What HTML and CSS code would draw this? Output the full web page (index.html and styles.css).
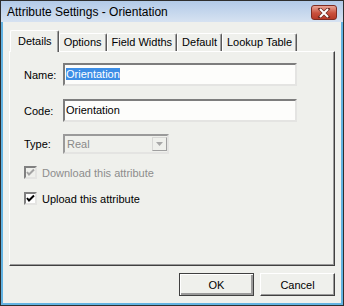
FILE: index.html
```html
<!DOCTYPE html>
<html lang="en">
<head>
    <meta charset="UTF-8">
    <title>Attribute Settings - Orientation</title>
    <link rel="stylesheet" href="styles.css">
</head>
<body>

<div class="window">
    <div class="titlebar">
        <span class="title">Attribute Settings - Orientation</span>
        <button class="close">
            <svg width="14" height="10" viewBox="0 0 14 10">
                <path d="M3 1 L11 9 M11 1 L3 9" stroke="#6b2a20" stroke-width="3.4" stroke-linecap="square"/>
                <path d="M3 1 L11 9 M11 1 L3 9" stroke="#fff" stroke-width="2"/>
            </svg>
        </button>
    </div>

    <div class="content">
        <div class="tabs">
            <div class="tab active">Details</div>
            <div class="tab">Options</div>
            <div class="tab">Field Widths</div>
            <div class="tab">Default</div>
            <div class="tab">Lookup Table</div>
        </div>

        <div class="panel">
            <div class="row row-name">
                <label>Name:</label>
                <div class="field"><span class="selected">Orientation</span></div>
            </div>
            <div class="row row-code">
                <label>Code:</label>
                <div class="field">Orientation</div>
            </div>
            <div class="row row-type">
                <label>Type:</label>
                <div class="select">
                    <span>Real</span>
                    <span class="arrow">
                        <svg width="7" height="4" viewBox="0 0 7 4"><path d="M0 0 H7 L3.5 4 Z" fill="#a8a8a8"/></svg>
                    </span>
                </div>
            </div>
            <div class="check disabled">
                <span class="box">
                    <svg width="9" height="9" viewBox="0 0 9 9"><path d="M1 4 L3 6.5 L8 1.5" stroke="#a3a3a3" stroke-width="2" fill="none"/></svg>
                </span>
                Download this attribute
            </div>
            <div class="check">
                <span class="box">
                    <svg width="9" height="9" viewBox="0 0 9 9"><path d="M1 4 L3 6.5 L8 1.5" stroke="#000" stroke-width="2" fill="none"/></svg>
                </span>
                Upload this attribute
            </div>
        </div>

        <div class="actions">
            <button class="btn default">OK</button>
            <button class="btn">Cancel</button>
        </div>
    </div>
</div>

</body>
</html>
```

FILE: styles.css
```css
body {
    margin: 0;
    font-family: 'Liberation Sans', Arial, sans-serif;
    font-size: 11px;
    color: #000;
    background: #fff;
}
.window {
    width: 344px;
    height: 306px;
    box-sizing: border-box;
    border: 1px solid #2e2e2e;
    background: #eff0ec;
    box-shadow: inset 0 0 0 2px #63b3e2;
    display: flex;
    flex-direction: column;
}
.titlebar {
    height: 21px;
    background: linear-gradient(#b2cae8, #d6e2f1);
    display: flex;
    align-items: center;
    justify-content: space-between;
    padding: 0 6px 0 6px;
}
.title {
    font-size: 12px;
    color: #000;
}
.close {
    width: 26px;
    height: 15px;
    padding: 0;
    margin-top: 2px;
    border: 1px solid #7e2c22;
    border-radius: 3px;
    background: linear-gradient(#e9a596, #c9503c 55%, #b73a28);
    display: flex;
    align-items: center;
    justify-content: center;
}
.content {
    flex: 1;
    padding: 7px 8px 0 8px;
}
.tabs {
    display: flex;
    align-items: flex-end;
    padding-left: 1px;
    height: 22px;
    position: relative;
    z-index: 1;
}
.tab {
    height: 17px;
    line-height: 17px;
    padding: 0 4px;
    border: 1px solid #fff;
    border-bottom: none;
    border-right-color: #5a5a5a;
    box-shadow: inset -1px 0 #a0a0a0;
    border-radius: 2px 2px 0 0;
}
.tab.active {
    height: 21px;
    line-height: 20px;
    padding: 0 6px 0 7px;
    margin-bottom: -1px;
    background: #eff0ec;
}
.panel {
    box-sizing: border-box;
    height: 215px;
    border: 1px solid #fff;
    border-right-color: #404040;
    border-bottom-color: #404040;
    box-shadow: inset -1px -1px #9a9a9a;
    padding: 11px 0 0 14px;
}
.row {
    display: flex;
    align-items: center;
}
.row label {
    width: 39px;
}
.row-code {
    margin-top: 13px;
}
.row-type {
    margin-top: 12px;
}
.field {
    width: 229px;
    height: 19px;
    line-height: 19px;
    background: #fdfdfb;
    border: 2px solid #e4e4e2;
    border-top-color: #7d7d7d;
    border-left-color: #7d7d7d;
    padding-left: 1px;
    white-space: nowrap;
}
.selected {
    background: #3d8ee6;
    color: #fff;
}
.select {
    width: 100px;
    height: 16px;
    border: 2px solid #e4e4e2;
    border-top-color: #9a9a9a;
    border-left-color: #9a9a9a;
    display: flex;
    align-items: center;
    justify-content: space-between;
    color: #8a8a8a;
    padding-left: 2px;
}
.arrow {
    width: 15px;
    height: 14px;
    box-sizing: border-box;
    border: 1px solid #d8d8d6;
    border-right-color: #a0a0a0;
    border-bottom-color: #a0a0a0;
    display: flex;
    align-items: center;
    justify-content: center;
}
.check {
    display: flex;
    align-items: center;
    margin-top: 12px;
    height: 13px;
}
.check + .check {
    margin-top: 13px;
}
.check.disabled {
    color: #8d8d8d;
}
.box {
    width: 9px;
    height: 9px;
    background: #fff;
    border: 2px solid #e4e4e2;
    border-top-color: #808080;
    border-left-color: #808080;
    margin-right: 5px;
    display: flex;
    align-items: center;
    justify-content: center;
}
.disabled .box {
    background: #eff0ec;
}
.actions {
    display: flex;
    justify-content: flex-end;
    gap: 6px;
    margin-top: 7px;
}
.btn {
    width: 75px;
    height: 23px;
    font-family: inherit;
    font-size: 11px;
    background: #eff0ec;
    border: 1px solid #fff;
    border-right-color: #404040;
    border-bottom-color: #404040;
    box-shadow: inset -1px -1px #9a9a9a;
    padding: 0;
}
.btn.default {
    border: 1px solid #404040;
    box-shadow: inset 1px 1px #fff, inset -2px -2px #9a9a9a;
}
```
